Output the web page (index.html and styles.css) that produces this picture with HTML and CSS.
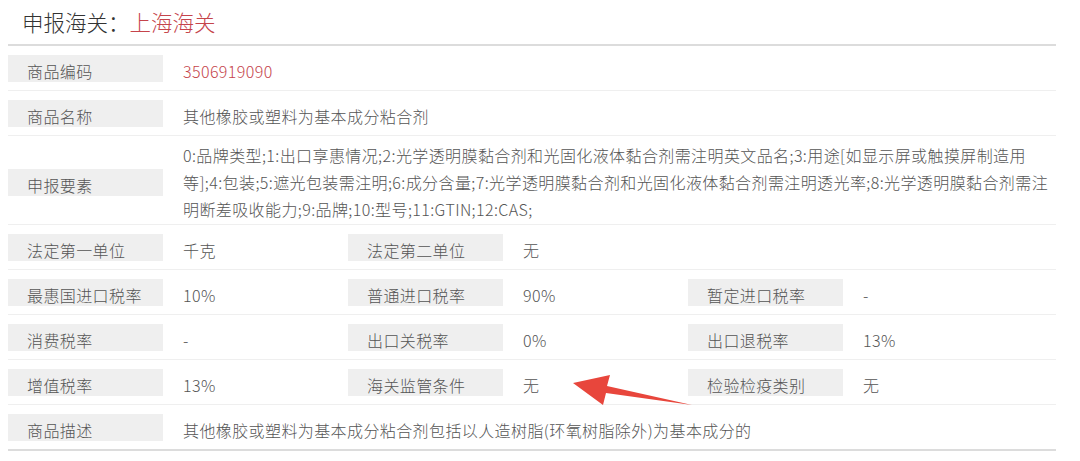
FILE: index.html
```html
<!DOCTYPE html>
<html lang="zh-CN">
<head>
    <meta charset="UTF-8">
    <meta name="viewport" content="width=device-width, initial-scale=1.0">
    <title>商品编码详情</title>
    <link rel="stylesheet" href="styles.css">
</head>

<body>
    <div class="container">
        <!-- Header -->
        <h2 class="title">申报海关：<span class="red">上海海关</span></h2>

        <!-- Detail table -->
        <div class="detail">
            <div class="row">
                <div class="label">商品编码</div>
                <div class="value red">3506919090</div>
            </div>
            <div class="row">
                <div class="label">商品名称</div>
                <div class="value">其他橡胶或塑料为基本成分粘合剂</div>
            </div>
            <div class="row row-multi">
                <div class="label">申报要素</div>
                <div class="value multi">0:品牌类型;1:出口享惠情况;2:光学透明膜黏合剂和光固化液体黏合剂需注明英文品名;3:用途[如显示屏或触摸屏制造用<br>等];4:包装;5:遮光包装需注明;6:成分含量;7:光学透明膜黏合剂和光固化液体黏合剂需注明透光率;8:光学透明膜黏合剂需注<br>明断差吸收能力;9:品牌;10:型号;11:GTIN;12:CAS;</div>
            </div>
            <div class="row">
                <div class="cell">
                    <div class="label">法定第一单位</div>
                    <div class="value">千克</div>
                </div>
                <div class="cell">
                    <div class="label">法定第二单位</div>
                    <div class="value">无</div>
                </div>
            </div>
            <div class="row">
                <div class="cell">
                    <div class="label">最惠国进口税率</div>
                    <div class="value">10%</div>
                </div>
                <div class="cell">
                    <div class="label">普通进口税率</div>
                    <div class="value">90%</div>
                </div>
                <div class="cell">
                    <div class="label">暂定进口税率</div>
                    <div class="value">-</div>
                </div>
            </div>
            <div class="row">
                <div class="cell">
                    <div class="label">消费税率</div>
                    <div class="value">-</div>
                </div>
                <div class="cell">
                    <div class="label">出口关税率</div>
                    <div class="value">0%</div>
                </div>
                <div class="cell">
                    <div class="label">出口退税率</div>
                    <div class="value">13%</div>
                </div>
            </div>
            <div class="row">
                <div class="cell">
                    <div class="label">增值税率</div>
                    <div class="value">13%</div>
                </div>
                <div class="cell">
                    <div class="label">海关监管条件</div>
                    <div class="value">无</div>
                </div>
                <div class="cell">
                    <div class="label">检验检疫类别</div>
                    <div class="value">无</div>
                </div>
            </div>
            <div class="row row-last">
                <div class="label">商品描述</div>
                <div class="value">其他橡胶或塑料为基本成分粘合剂包括以人造树脂(环氧树脂除外)为基本成分的</div>
            </div>
        </div>

        <!-- Red arrow pointing at 海关监管条件 -->
        <svg class="arrow" width="1080" height="461" viewBox="0 0 1080 461">
            <polygon points="573,383 610,375 607,386 692,405 606,393 603,405" fill="#e8463c"/>
        </svg>
    </div>
</body>
</html>
```

FILE: styles.css
```css
/* General */
body {
    margin: 0;
    padding: 0;
    background-color: #fff;
    font-family: "Noto Sans CJK SC", "Noto Sans", sans-serif;
    font-weight: 300;
    color: #555;
}

.container {
    position: relative;
    width: 1048px;
    margin-left: 8px;
}

.red {
    color: #c5444b;
}

/* Title */
.title {
    margin: 0;
    padding-left: 14px;
    height: 44px;
    line-height: 44px;
    font-size: 21.5px;
    font-weight: 300;
    color: #333;
    border-bottom: 2px solid #dcdcdc;
}

/* Rows */
.row {
    display: flex;
    align-items: center;
    padding: 5px 0;
    border-bottom: 1px solid #efefef;
    font-size: 16px;
    letter-spacing: 0.4px;
}

.row-multi {
    padding: 6px 0 1px;
}

.row-last {
    border-bottom: 2px solid #dcdcdc;
}

.cell {
    display: flex;
    align-items: center;
    width: 340px;
}

.label {
    flex: none;
    box-sizing: border-box;
    width: 155px;
    height: 27px;
    padding-left: 19px;
    line-height: 32px;
    background-color: #efefef;
    white-space: nowrap;
}

.value {
    padding-left: 20px;
    padding-top: 7px;
    line-height: 27px;
}

.value.multi {
    padding-top: 0;
    line-height: 27px;
    white-space: nowrap;
}

/* Arrow overlay */
.arrow {
    position: absolute;
    left: -8px;
    top: 0;
    pointer-events: none;
}
```
